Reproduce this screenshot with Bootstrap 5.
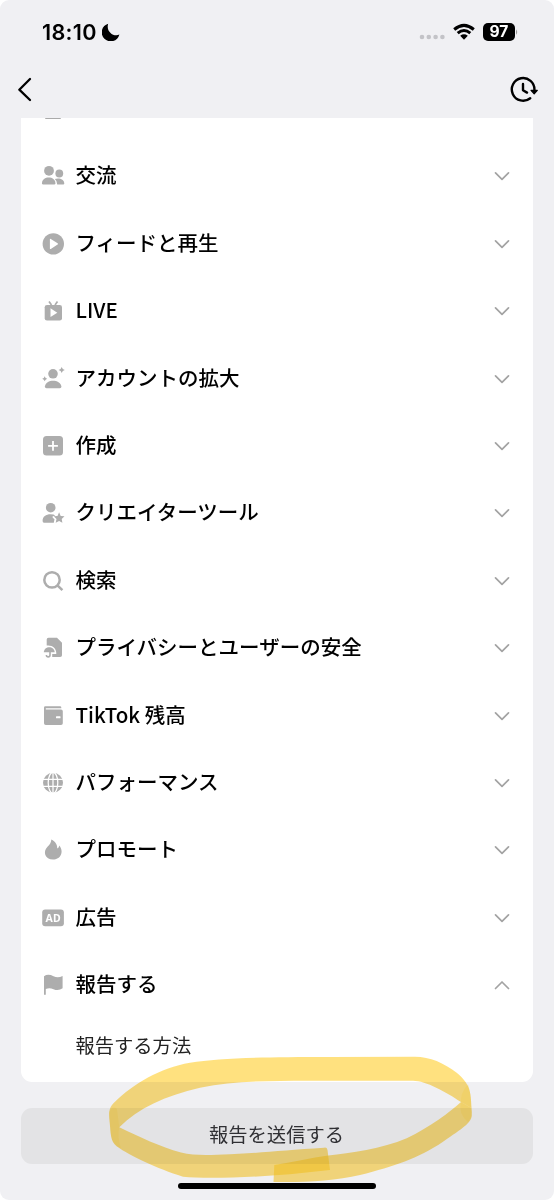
<!DOCTYPE html>
<html lang="ja">
<head>
<meta charset="utf-8">
<meta name="viewport" content="width=device-width, initial-scale=1">
<title>ヘルプ</title>
<link href="https://cdn.jsdelivr.net/npm/bootstrap@5.3.0/dist/css/bootstrap.min.css" rel="stylesheet">
<style>
body{background:#fff;font-family:"Noto Sans CJK JP",sans-serif;color:#000}
.screen{width:554px;height:1200px;background:#f0f0f3;border-radius:9px}
.statusbar{height:62px;padding:1px 36px 0 42px}
.clock{font:600 21.6px/62px Inter,sans-serif;letter-spacing:.3px;color:#000}
.moon{margin-left:5.5px}
.signal{margin-top:11px}
.battery{width:32px;height:18px;border-radius:5px;background:#000;color:#fff;font:700 15.6px/18px Inter,sans-serif;margin-left:8px}
.topnav{height:56px;padding:0 15px 0 17px}
.topics{margin:0 21px;height:964px;border-radius:0 0 11px 11px}
.previous{height:24.8px;padding-left:24px}
.previous i{width:16px;height:1.3px;background:#aaa;border-radius:0 0 2px 2px}
.topic{height:67.4px;padding:0 22px 0 19px;background:none;border:0;color:#000}
.topic .ico{width:26px;height:26px;fill:#adadad;flex:none}
.topic .label{font-size:20.5px;font-weight:500;line-height:30px;margin:-4px 0 0 9.5px}
.topic .chev{width:18px;height:12px;fill:none;stroke:#a3a3a3;stroke-width:1.7;flex:none;stroke-linecap:round;stroke-linejoin:round}
.sub{font-size:19.3px;line-height:30px;padding:11px 0 0 54.5px;color:#222}
.send{margin:26px 21px 0;height:56px;border-radius:11px;background:#e3e3e5;border:0;font-size:19.3px;color:#303034;padding:0 1px 3px 0}
.home{width:198px;height:6px;border-radius:3px;background:#000;margin:19.4px auto 0}
.marker{left:0;top:1040px;pointer-events:none;mix-blend-mode:multiply}
</style>
</head>
<body>
<div class="screen position-relative overflow-hidden d-flex flex-column">
  <header>
    <div class="statusbar d-flex align-items-center">
      <span class="clock">18:10</span>
      <svg class="moon" width="18" height="18" viewBox="0 0 18 18"><path d="M6.200 .7A9 9 0 1 0 17.400 11.600C11.200 14.200 3.700 8.200 6.200 .7Z"/></svg>
      <svg class="signal ms-auto" width="26" height="6" viewBox="0 0 26 6" fill="#c3c3c7"><circle cx="3" cy="3" r="2.300"/><circle cx="9.800" cy="3" r="2.300"/><circle cx="16.600" cy="3" r="2.300"/><circle cx="23.400" cy="3" r="2.300"/></svg>
      <svg class="ms-2" width="22" height="18" viewBox="0 0 22 18"><g fill="none" stroke="#000" stroke-width="3"><path d="M1.200 6.500Q11-1.700 20.800 6.500"/><path d="M4.700 10.200Q11 4.900 17.300 10.200"/></g><path d="M7.200 12.700Q11 9.900 14.800 12.700L11 16.700Z"/></svg>
      <span class="battery d-flex justify-content-center">97</span>
      <svg width="3" height="8" viewBox="0 0 3 8"><path d="M1 1.200Q3.400 4 1 6.800Z" fill="#999"/></svg>
    </div>
    <div class="topnav d-flex align-items-center justify-content-between">
      <svg width="16" height="26" viewBox="0 0 16 26" fill="none" stroke="#000" stroke-width="2.300" stroke-linecap="round" stroke-linejoin="round"><path d="M13 2 2.300 12.700 13 23"/></svg>
      <svg width="30" height="28" viewBox="0 0 30 28" fill="none" stroke="#000" stroke-width="2.400" stroke-linecap="round" stroke-linejoin="round"><path d="M21.200 22.200A11.300 11.300 0 1 1 25.400 14M14 8V14.200L18 16.600"/><path d="M22 14.400H28.300L25.200 17.800Z" fill="#000" stroke-width="1.200"/></svg>
    </div>
  </header>

  <main class="topics bg-white flex-shrink-0">
    <div class="previous"><i class="d-block"></i></div>
    <div id="topicList"></div>
    <div class="sub">報告する方法</div>
  </main>
  <button class="send flex-shrink-0">報告を送信する</button>
  <div class="home flex-shrink-0"></div>

  <svg class="marker position-absolute" width="554" height="160" viewBox="0 1040 554 160" fill="#ffcb22" fill-opacity=".58">
    <path d="M471.500 1108C471 1091 470 1084 456.700 1072.700C444 1063 430 1056.700 415 1056.700L330 1057C260 1057 220 1058 190 1062.700C160 1068 133 1084 115 1101.700C109 1107 108.500 1112 109.500 1121C111 1134 110 1141 117 1146.500C130 1156 157 1168.500 183 1176.700C205 1179 250 1177.500 290 1174.300L330 1170L327.500 1150Q327 1147 324 1147.700C285 1150 260 1153 230 1154.300C210 1155 195 1156 181 1152.500C160 1147 140 1137 119.300 1127.300C138 1108 165 1096 200 1087.700C240 1080 280 1080.700 330 1080.700H413C426 1080.700 446 1092 461 1102Z"/>
    <path d="M461 1102L471.500 1108Q472 1112 471.700 1116C471 1123 463 1128 443 1141.700C417 1159 395 1166 360 1175C335 1181 305 1182.500 273.500 1182L274.300 1165C295 1162 310 1158 328.300 1155.500C350 1153 382 1149 406.700 1138.300C430 1127 450 1112 461 1102Z"/>
    <path d="M461 1102Q460 1094 468 1084Q471 1092 471.700 1116L468 1122Q458 1114 461 1102Z" fill-opacity=".16"/>
    <path d="M109.200 1112Q113 1105 117 1109L119.300 1127.300Q117 1137 121 1148L117 1146.500C110 1141 111 1134 109.200 1112Z" fill-opacity=".16"/>
  </svg>
</div>

<script>
const topics = [
  ['交流','<circle cx="9" cy="7.800" r="4.900"/><path d="M2 20.300C2 12.700 15.400 12.700 15.400 20.300Q15.400 21.500 14.200 21.500H3.200Q2 21.500 2 20.300Z"/><circle cx="19.300" cy="10.500" r="3.900"/><path d="M14.800 15.900C19 14.500 24.300 16 24.300 20.500Q24.300 21.500 23.200 21.500H17.200Q17.500 18 14.800 15.900Z"/>'],
  ['フィードと再生','<circle cx="13.300" cy="12.900" r="10.700"/><path d="M9.900 8.300Q9.900 7.300 10.800 7.900L17.600 12.200Q18.600 12.900 17.600 13.600L10.800 17.900Q9.900 18.400 9.900 17.400Z" fill="#fff"/>'],
  ['LIVE','<path d="M9 3.500 11.500 7M17.500 3.500 15 7" stroke="#adadad" stroke-width="1.700"/><rect x="4.700" y="7" width="17.300" height="15.500" rx="2.300"/><path d="M10.500 10.300 17.300 14.700 10.500 19Z" fill="#fff"/>'],
  ['アカウントの拡大','<circle cx="13" cy="7.800" r="4.800"/><path d="M4.900 20.500C5.800 12.800 20.300 12.800 21.400 20.500Q21.500 22.300 19.800 22.300H6.500Q4.800 22.300 4.900 20.500Z"/><path d="M4.700 10.300 5.600 11.900 7.200 12.800 5.600 13.700 4.700 15.300 3.800 13.700 2.200 12.800 3.800 11.900ZM21.700 .9 22.800 2.900 24.800 4 22.800 5.100 21.700 7.100 20.600 5.100 18.600 4 20.600 2.900Z"/>'],
  ['作成','<rect x="3" y="3" width="20" height="19.600" rx="3.500"/><path d="M13 8V17.800M8.100 12.900H17.900" stroke="#fff" stroke-width="1.800"/>'],
  ['クリエイターツール','<circle cx="10.700" cy="7.700" r="4.800"/><path d="M2.600 21C2.600 16.500 6 14.300 10.500 14.300Q14 14.300 15.300 15.500L12.500 16.500Q12 17.500 14.500 19.300L13.800 22.700H4Q2.600 22.700 2.600 21Z"/><path d="M19.100 12.200 20.700 15.900 24.500 16.300 21.700 18.900 22.400 22.800 19.100 20.900 15.700 22.800 16.500 18.900 13.700 16.300 17.500 15.900Z"/>'],
  ['検索','<g fill="none" stroke="#adadad" stroke-width="2.500"><circle cx="12" cy="11.900" r="7.700"/><path d="M17.400 17.300 22.400 22.200"/></g>'],
  ['プライバシーとユーザーの安全','<path d="M6.700 4.500Q6.700 2.700 8.500 2.700H17L22 7.700V20.300Q22 22.100 20.200 22.100H12.200V19H16.300C16.600 13 12 9.800 6.700 10.600Z"/><path d="M3.800 17.300C4 10.400 14.500 10.400 14.700 17.300Z"/><path d="M10 16V20Q10 21.900 8.200 21.900T6.400 20" fill="none" stroke="#adadad" stroke-width="1.600"/>'],
  ['TikTok 残高','<path d="M4 4.600Q4 3.300 5.400 3.300H20Q21.300 3.300 21.300 4.600V5.300H5.800V6.500H21Q22.800 6.500 22.800 8.300V20.300Q22.800 22 21 22H5.800Q4 22 4 20.300Z"/><rect x="16" y="13.200" width="4.500" height="2.100" rx=".5" fill="#fff"/>'],
  ['パフォーマンス','<circle cx="13" cy="12.800" r="10"/><g fill="none" stroke="#fff" stroke-width="1.250"><ellipse cx="13" cy="12.800" rx="4.800" ry="10.500"/><path d="M13 2V23.500M2.500 9.300H23.500M2.500 16.300H23.500"/></g>'],
  ['プロモート','<path d="M11.300 2.400C15.500 4.600 17.600 7.800 17.200 11.600Q19 10.600 19.300 8.400C24.500 15 20.300 22.500 13.100 22.500C5 22.500 2.500 14.500 7.500 9.700Q11.300 6 11.300 2.400Z"/>'],
  ['広告','<rect x="2.200" y="4.500" width="21.700" height="16.700" rx="3"/><text x="13.100" y="16.700" fill="#fff" text-anchor="middle" font-family="Noto Sans" font-weight="700" font-size="10.500">AD</text>'],
  ['報告する','<path d="M4 4.200Q8 1.500 13.500 4.200 18 6.300 22.600 3.900V16.300Q18.500 19.300 13.500 17.200 9.500 15.400 5.800 17V22.700H4Z"/>']
];
document.getElementById('topicList').innerHTML = topics.map(([name, art], i) =>
  `<button class="topic w-100 d-flex align-items-center text-start">
    <svg class="ico" viewBox="0 0 26 26">${art}</svg><span class="label">${name}</span>
    <svg class="chev ms-auto" viewBox="0 0 18 12"><path d="${i === 12 ? 'M2.500 9.500 9 3 15.500 9.500' : 'M2.500 2.800 9 9.300 15.500 2.800'}"/></svg>
  </button>`).join('');
</script>
<script src="https://cdn.jsdelivr.net/npm/bootstrap@5.3.0/dist/js/bootstrap.bundle.min.js"></script>
</body>
</html>
